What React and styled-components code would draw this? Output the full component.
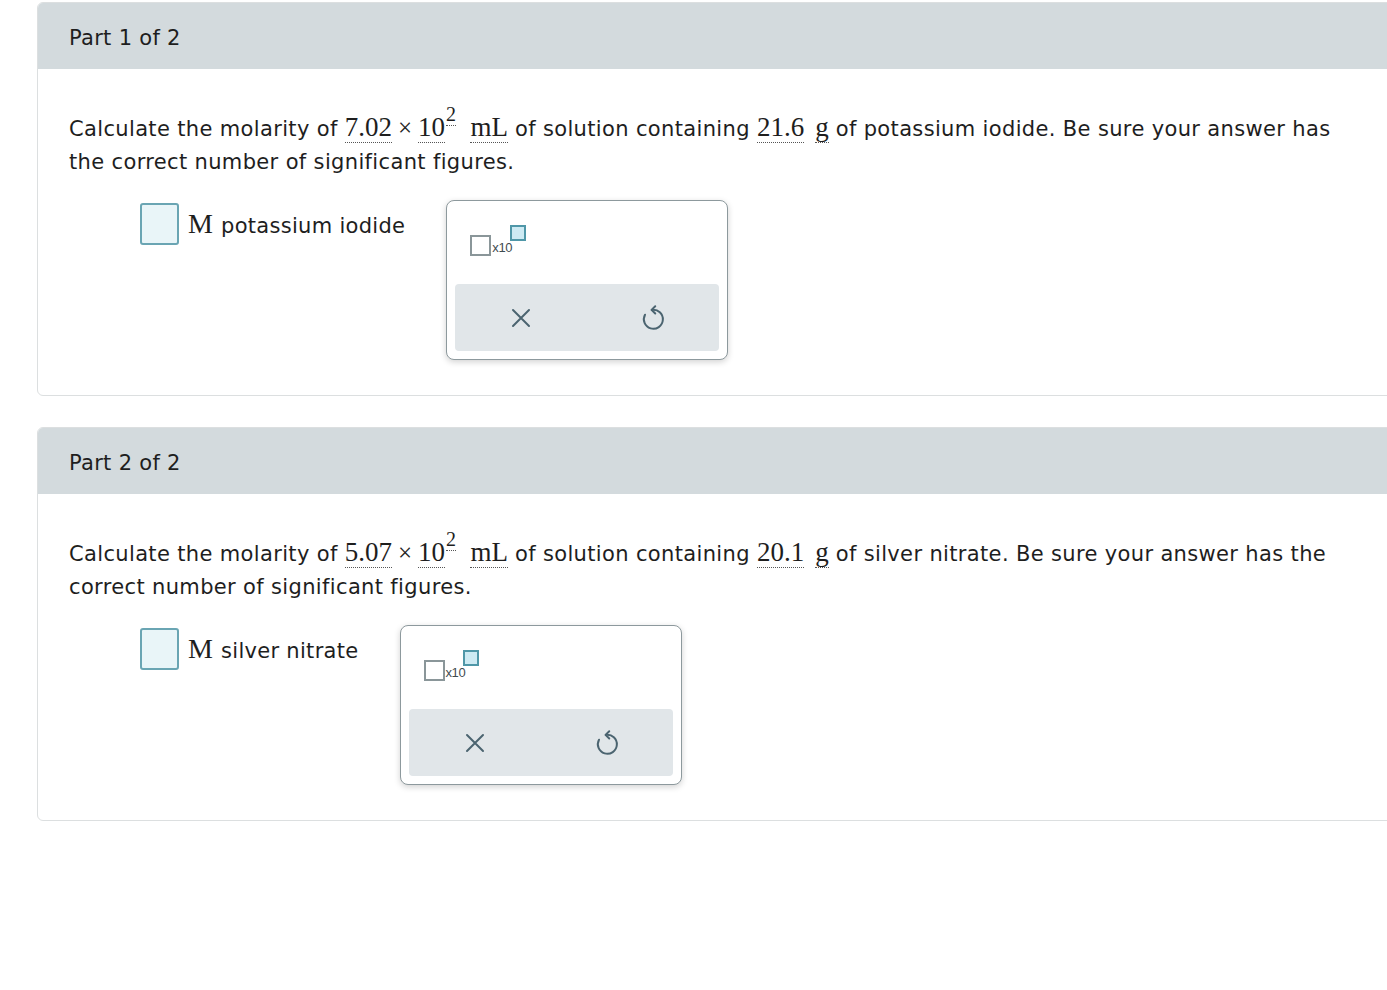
import styled, { createGlobalStyle } from 'styled-components';

const GlobalStyle = createGlobalStyle`
  html, body {
    margin: 0;
    padding: 0;
    background: #ffffff;
    overflow-x: hidden;
  }
  body {
    font-family: 'DejaVu Sans', Verdana, sans-serif;
    color: #222222;
  }
`;

const Page = styled.div`
  padding: 2px 0 0 37px;
  display: flex;
  flex-direction: column;
  gap: 31px;
`;

const Card = styled.section`
  width: 1380px;
  border: 1px solid #dcdfe0;
  border-radius: 6px;
  overflow: hidden;
  background: #ffffff;
`;

const CardHeader = styled.div`
  height: 66px;
  background: #d3dadd;
  display: flex;
  align-items: center;
  padding: 4px 0 0 31px;
  box-sizing: border-box;
  font-size: 21px;
  letter-spacing: 0.3px;
  color: #1e1e1e;
`;

const CardBody = styled.div`
  padding: 42px 32px 35px 31px;
`;

const Question = styled.p`
  margin: 0;
  font-size: 21px;
  letter-spacing: 0.35px;
  line-height: 33px;
  max-width: 1270px;
  color: #1e1e1e;
`;

const MathNum = styled.span`
  font-family: 'Liberation Serif', 'Times New Roman', serif;
  font-size: 27px;
  letter-spacing: 0;
  border-bottom: 1px dotted #555555;
  line-height: 1;
`;

const Times = styled.span`
  font-family: 'Liberation Serif', 'Times New Roman', serif;
  font-size: 25px;
  margin: 0 6px;
  letter-spacing: 0;
`;

const Sup = styled.sup`
  font-family: 'Liberation Serif', 'Times New Roman', serif;
  font-size: 20px;
  line-height: 0;
  vertical-align: 15px;
  border-bottom: 1px dotted #555555;
  margin-left: 1px;
`;

const Gap = styled.span`
  display: inline-block;
  width: ${({ $w }) => $w}px;
`;

const AnswerRow = styled.div`
  display: flex;
  align-items: flex-start;
  gap: 41px;
  margin: 22px 0 0 71px;
`;

const AnswerLabel = styled.div`
  display: flex;
  align-items: center;
  gap: 9px;
  margin-top: 2px;
`;

const InputBox = styled.div`
  width: 35px;
  height: 38px;
  border: 2px solid #6aa5b3;
  border-radius: 3px;
  background: #e9f5f8;
`;

const Unit = styled.span`
  font-family: 'Liberation Serif', 'Times New Roman', serif;
  font-size: 28px;
  color: #1e1e1e;
  margin-right: 3px;
`;

const Substance = styled.span`
  font-size: 21px;
  letter-spacing: 0.3px;
  color: #1e1e1e;
`;

const Palette = styled.div`
  width: 280px;
  height: 158px;
  margin-top: -1px;
  border: 1px solid #8d999d;
  border-radius: 8px;
  box-shadow: 0 2px 6px rgba(0, 0, 0, 0.18);
  background: #ffffff;
  display: flex;
  flex-direction: column;
`;

const PaletteTop = styled.div`
  height: 83px;
  padding: 24px 0 0 23px;
  box-sizing: border-box;
`;

const SciWidget = styled.div`
  display: flex;
  align-items: flex-end;
  height: 31px;
`;

const BaseBox = styled.div`
  width: 17px;
  height: 17px;
  border: 2px solid #8a9699;
  background: #ffffff;
`;

const TenText = styled.span`
  font-family: 'Liberation Sans', Arial, sans-serif;
  font-size: 13px;
  color: #3f4c50;
  margin: 0 0 1px 1px;
  letter-spacing: -0.4px;
`;

const ExpBox = styled.div`
  align-self: flex-start;
  width: 12px;
  height: 12px;
  border: 2px solid #4f97a8;
  background: #cdeaf3;
  margin-left: -2px;
`;

const ActionBar = styled.div`
  margin: 0 8px 8px 8px;
  flex: 1;
  background: #e1e6e9;
  border-radius: 4px;
  display: grid;
  grid-template-columns: 1fr 1fr;
  align-items: center;
  justify-items: center;
`;

const IconButton = styled.button`
  border: none;
  background: transparent;
  padding: 0;
  width: 32px;
  height: 32px;
  display: flex;
  align-items: center;
  justify-content: center;
  color: #4b6470;
  cursor: pointer;
`;

const CloseIcon = () => (
  <svg width="22" height="22" viewBox="0 0 22 22" fill="none" stroke="currentColor" strokeWidth="2" strokeLinecap="round">
    <path d="M3 3L19 19M19 3L3 19" />
  </svg>
);

const UndoIcon = () => (
  <svg width="30" height="30" viewBox="0 0 24 24" fill="none" stroke="currentColor" strokeWidth="1.6" strokeLinecap="round" strokeLinejoin="round">
    <path d="M11.2 5.5A7.6 7.6 0 1 1 5.6 9.4" />
    <path d="M13.8 2.6L10.8 5.5L13.8 8.4" />
  </svg>
);

const parts = [
  { n: 1, volume: '7.02', mass: '21.6', substance: 'potassium iodide' },
  { n: 2, volume: '5.07', mass: '20.1', substance: 'silver nitrate' },
];

const Part = ({ n, volume, mass, substance }) => (
  <Card>
    <CardHeader>Part {n} of 2</CardHeader>
    <CardBody>
      <Question>
        Calculate the molarity of <MathNum>{volume}</MathNum>
        <Times>×</Times>
        <MathNum>10</MathNum>
        <Sup>2</Sup>
        <Gap $w={14} />
        <MathNum>mL</MathNum> of solution containing <MathNum>{mass}</MathNum>
        <Gap $w={4} />{' '}
        <MathNum>g</MathNum> of {substance}. Be sure your answer has the correct number of
        significant figures.
      </Question>
      <AnswerRow>
        <AnswerLabel>
          <InputBox />
          <span>
            <Unit>M</Unit> <Substance>{substance}</Substance>
          </span>
        </AnswerLabel>
        <Palette>
          <PaletteTop>
            <SciWidget>
              <BaseBox />
              <TenText>x10</TenText>
              <ExpBox />
            </SciWidget>
          </PaletteTop>
          <ActionBar>
            <IconButton>
              <CloseIcon />
            </IconButton>
            <IconButton>
              <UndoIcon />
            </IconButton>
          </ActionBar>
        </Palette>
      </AnswerRow>
    </CardBody>
  </Card>
);

export default function App() {
  return (
    <>
      <GlobalStyle />
      <Page>
        {parts.map((p) => (
          <Part key={p.n} {...p} />
        ))}
      </Page>
    </>
  );
}
